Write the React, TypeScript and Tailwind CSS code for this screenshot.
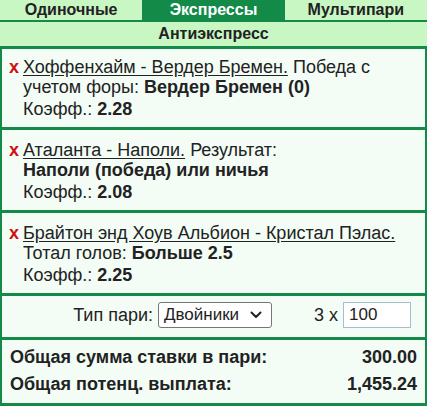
import React from "react";

type Bet = {
  id: number;
  match: string;
  market: string;
  pick: string;
  odds: string;
};

const bets: Bet[] = [
  {
    id: 1,
    match: "Хоффенхайм - Вердер Бремен.",
    market: "Победа с учетом форы:",
    pick: "Вердер Бремен (0)",
    odds: "2.28",
  },
  {
    id: 2,
    match: "Аталанта - Наполи.",
    market: "Результат:",
    pick: "Наполи (победа) или ничья",
    odds: "2.08",
  },
  {
    id: 3,
    match: "Брайтон энд Хоув Альбион - Кристал Пэлас.",
    market: "Тотал голов:",
    pick: "Больше 2.5",
    odds: "2.25",
  },
];

const tabs = ["Одиночные", "Экспрессы", "Мультипари"];

function BetRow({ bet, first }: { bet: Bet; first: boolean }) {
  return (
    <div
      className={
        "flex pl-[7px] pr-2 pb-2 border-b-[3px] border-[#138a47] " +
        (first ? "pt-2" : "pt-[10px]")
      }
    >
      <span className="w-[14px] shrink-0 font-bold text-[18px] text-[#d01010] leading-5">x</span>
      <div className="leading-5">
        <div>
          <span className="underline underline-offset-2">{bet.match}</span>{" "}
          {bet.market} <b className="whitespace-nowrap">{bet.pick}</b>
        </div>
        <div className="mt-[2px]">
          Коэфф.: <b>{bet.odds}</b>
        </div>
      </div>
    </div>
  );
}

export default function App() {
  return (
    <div
      className="w-[427px] h-[409px] bg-white text-[18px] text-[#222]"
      style={{ fontFamily: '"Liberation Sans", Arial, sans-serif' }}
    >
      <div className="grid grid-cols-3 h-5 bg-[#c8f7c4] font-bold text-[16px] leading-5 text-center">
        {tabs.map((t, i) => (
          <div key={t} className={i === 1 ? "bg-[#138a47] text-white" : ""}>
            {t}
          </div>
        ))}
      </div>
      <div className="h-[29px] border-t-2 border-b-[3px] border-[#138a47] bg-[#c8f7c4] text-center font-bold text-[16px] leading-6">
        Антиэкспресс
      </div>
      <div className="border-x-2 border-b-[3px] border-[#138a47] bg-[#f3fdf6]">
        {bets.map((b, i) => (
          <BetRow key={b.id} bet={b} first={i === 0} />
        ))}
        <div className="h-[44px] flex items-start justify-end pt-[6px] pr-[14px] border-b-[3px] border-[#138a47]">
          <span className="leading-[26px]">Тип пари:</span>
          <div className="ml-[5px] w-[114px] h-[26px] flex items-center justify-between bg-white border border-[#767676] rounded-[3px] pl-[5px] pr-[9px] text-[17px]">
            <span>Двойники</span>
            <svg width="12" height="8" viewBox="0 0 12 8" fill="none">
              <path
                d="M1.5 1.5 L6 6 L10.5 1.5"
                stroke="#222"
                strokeWidth="2"
                strokeLinecap="round"
                strokeLinejoin="round"
              />
            </svg>
          </div>
          <span className="ml-[42px] leading-[26px]">3 x</span>
          <input
            defaultValue="100"
            className="ml-[5px] w-[68px] h-[26px] bg-white border border-[#a9bccf] pl-[5px] outline-none text-[17px]"
          />
        </div>
        <div className="flex flex-col gap-[7px] pt-[7px] pb-[9px] px-2 font-bold leading-5">
          <div className="flex justify-between">
            <span>Общая сумма ставки в пари:</span>
            <span>300.00</span>
          </div>
          <div className="flex justify-between">
            <span>Общая потенц. выплата:</span>
            <span>1,455.24</span>
          </div>
        </div>
      </div>
    </div>
  );
}
